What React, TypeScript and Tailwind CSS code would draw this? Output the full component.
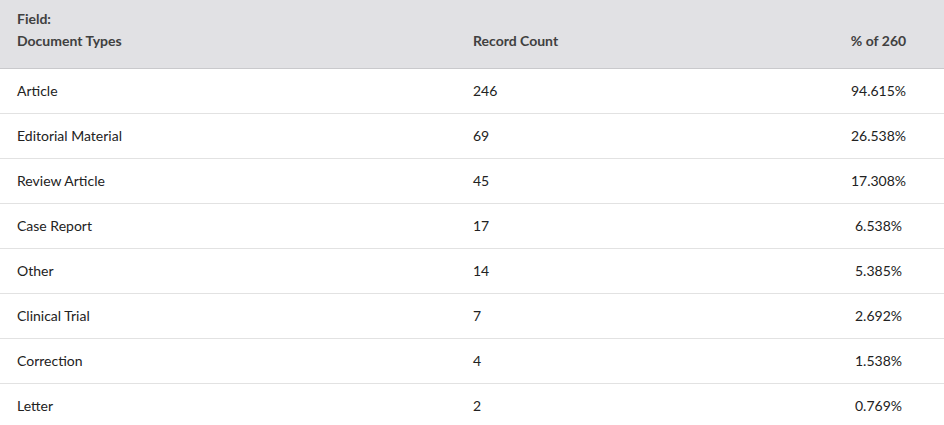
import React from "react";

const rows = [
  ["Article", "246", "94.615%"],
  ["Editorial Material", "69", "26.538%"],
  ["Review Article", "45", "17.308%"],
  ["Case Report", "17", "6.538%"],
  ["Other", "14", "5.385%"],
  ["Clinical Trial", "7", "2.692%"],
  ["Correction", "4", "1.538%"],
  ["Letter", "2", "0.769%"],
];

export default function App() {
  return (
    <div className="w-[944px] bg-white text-[14px] text-[#222222]" style={{ fontFamily: "Lato, 'Open Sans', sans-serif" }}>
      <div className="grid grid-cols-[456px_357px_1fr] h-[69px] bg-[#e1e1e4] border-b border-[#c9c9cc] font-bold text-[#404040] leading-[22px]">
        <div className="pl-[17px] pt-[8px]">
          <div>Field:</div>
          <div>Document Types</div>
        </div>
        <div className="pl-[17px] flex items-end pb-[16px]">Record Count</div>
        <div className="flex items-end justify-center pb-[16px]">% of 260</div>
      </div>
      {rows.map((r) => (
        <div key={r[0]} className="grid grid-cols-[456px_357px_1fr] h-[45px] items-center pb-[2px] border-b border-[#e2e2e2]">
          <div className="pl-[17px]">{r[0]}</div>
          <div className="pl-[17px]">{r[1]}</div>
          <div className="text-center">{r[2]}</div>
        </div>
      ))}
    </div>
  );
}
